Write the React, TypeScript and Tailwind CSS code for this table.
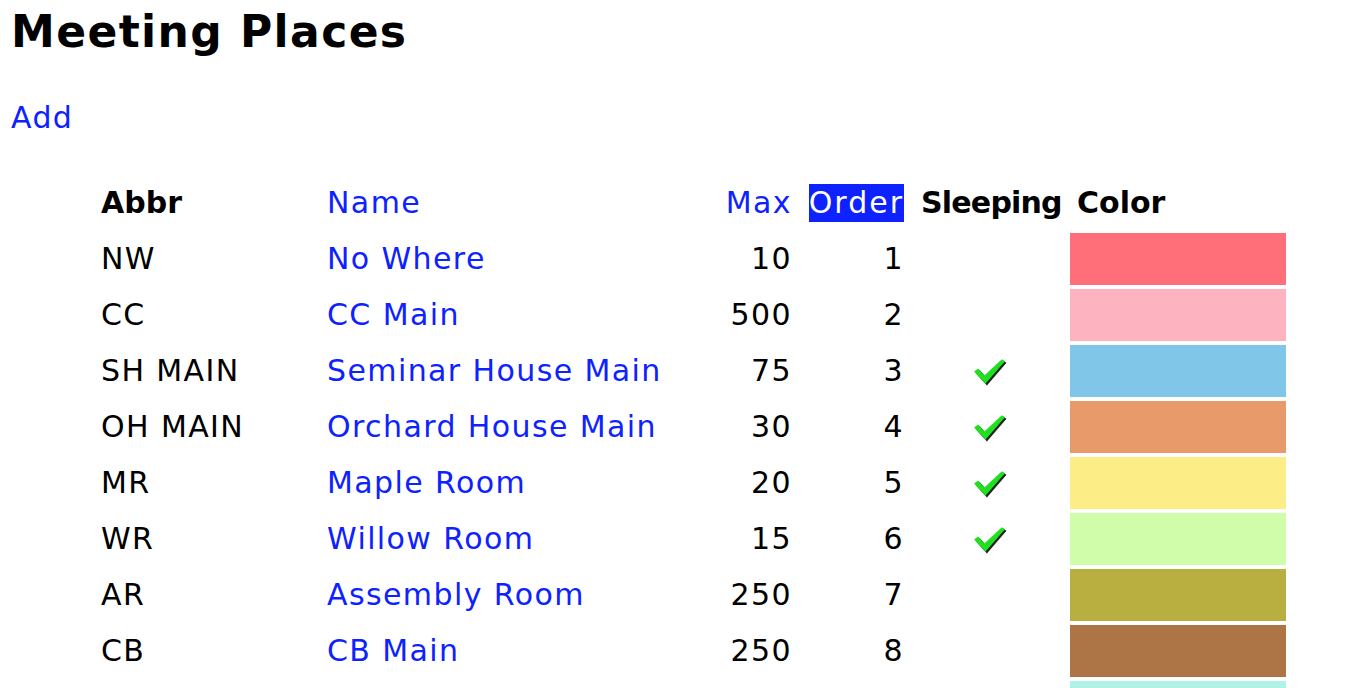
import React from 'react';

const LINK = 'text-[#0d22ff]';

const places = [
  { abbr: 'NW', name: 'No Where', max: 10, order: 1, sleeping: false, color: '#ff6f7a' },
  { abbr: 'CC', name: 'CC Main', max: 500, order: 2, sleeping: false, color: '#fdb4c0' },
  { abbr: 'SH MAIN', name: 'Seminar House Main', max: 75, order: 3, sleeping: true, color: '#80c6e8' },
  { abbr: 'OH MAIN', name: 'Orchard House Main', max: 30, order: 4, sleeping: true, color: '#e89a6a' },
  { abbr: 'MR', name: 'Maple Room', max: 20, order: 5, sleeping: true, color: '#fced86' },
  { abbr: 'WR', name: 'Willow Room', max: 15, order: 6, sleeping: true, color: '#cffdaa' },
  { abbr: 'AR', name: 'Assembly Room', max: 250, order: 7, sleeping: false, color: '#b9ae40' },
  { abbr: 'CB', name: 'CB Main', max: 250, order: 8, sleeping: false, color: '#ad7445' },
];

const Check = () => (
  <svg width="35" height="29" viewBox="0 0 34 28">
    <path d="M2 14 L6 11 L12 18 L29 2 L32 4 L13 26 Z" fill="#222" transform="translate(1.5,1.5)" />
    <path d="M2 14 L6 11 L12 18 L29 2 L32 4 L13 26 Z" fill="#1fe01f" />
  </svg>
);

export default function App() {
  return (
    <div className="bg-white h-[688px] overflow-hidden font-['DejaVu_Sans',sans-serif] text-black">
      <h1 className="pl-[11px] pt-[6px] text-[44px] leading-[52px] font-bold tracking-[1.4px]">Meeting Places</h1>
      <div className="mt-[32px] pl-[11px] text-[30px] leading-[56px] tracking-[1.4px]">
        <a className={LINK}>Add</a>
      </div>
      <div className="mt-[29px] pl-[101px] text-[30px] leading-[56px] tracking-[1.4px]">
        <div className="flex h-[56px] items-center">
          <div className="w-[226px] font-bold tracking-normal">Abbr</div>
          <div className={`w-[373px] ${LINK}`}>Name</div>
          <div className={`w-[92px] text-right ${LINK}`}>Max</div>
          <div className="w-[112px] flex justify-end">
            <span className="bg-[#0d22ff] text-white leading-[38px] tracking-[2px]">Order</span>
          </div>
          <div className="w-[166px] pl-[17px] font-bold tracking-[-0.8px] whitespace-nowrap">Sleeping</div>
          <div className="pl-[7px] font-bold tracking-normal">Color</div>
        </div>
        {places.map((p) => (
          <div key={p.abbr} className="flex h-[56px] items-center">
            <div className="w-[226px]">{p.abbr}</div>
            <div className={`w-[373px] ${LINK}`}>{p.name}</div>
            <div className="w-[92px] text-right">{p.max}</div>
            <div className="w-[112px] text-right">{p.order}</div>
            <div className="w-[166px] flex justify-center pl-[5px]">{p.sleeping ? <Check /> : null}</div>
            <div className="w-[216px] h-[52px]" style={{ backgroundColor: p.color }} />
          </div>
        ))}
        <div className="flex h-[56px] items-start pt-[2px]">
          <div className="ml-[969px] w-[216px] h-[52px] bg-[#b0f2e6]" />
        </div>
      </div>
    </div>
  );
}
